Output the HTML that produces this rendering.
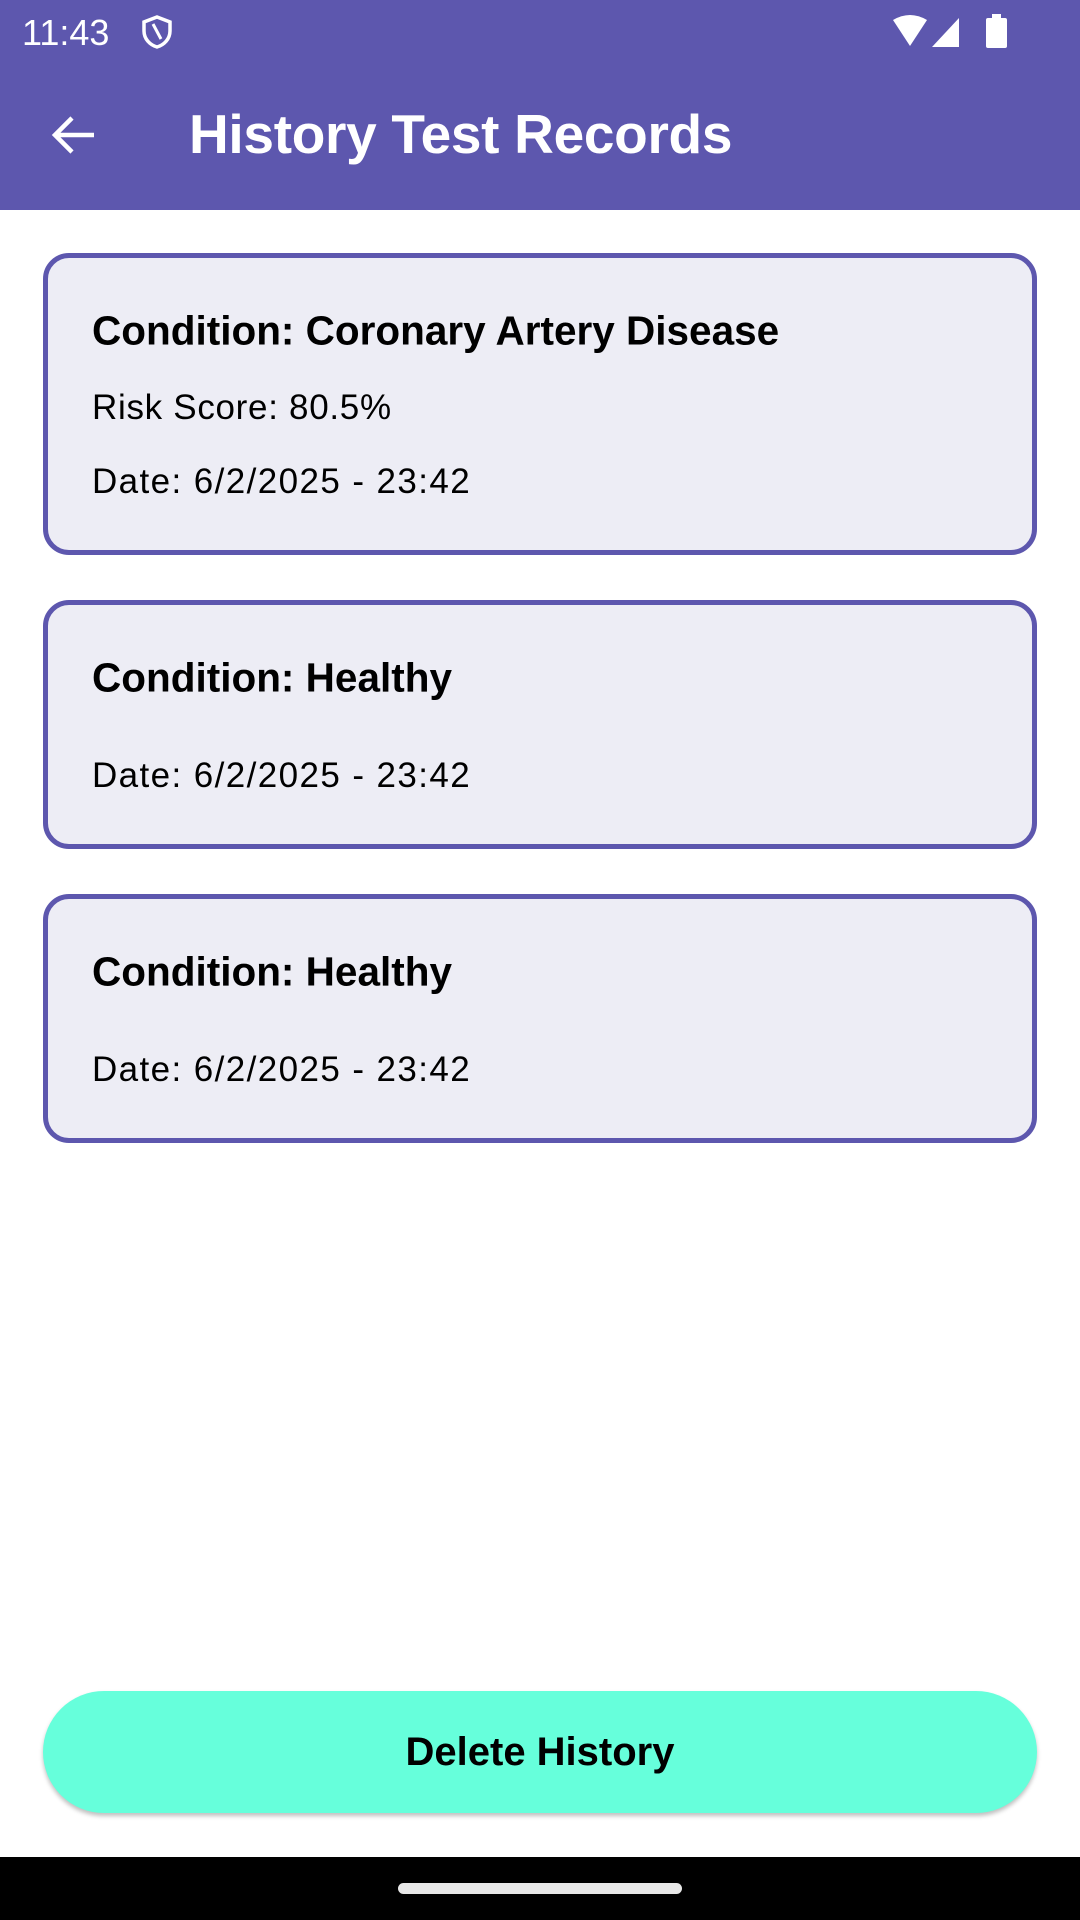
<!DOCTYPE html>
<html><head><meta charset="utf-8"><style>
*{margin:0;padding:0;box-sizing:border-box}
body{width:1080px;height:1920px;background:#fff;font-family:"Liberation Sans",sans-serif;position:relative;overflow:hidden}
.bar{position:absolute;left:0;top:0;width:1080px;height:210px;background:#5d57ae}
.abs{position:absolute;white-space:nowrap}
.card{position:absolute;left:43px;width:994px;background:#ededf5;border:5px solid #5d57ae;border-radius:26px}
.t{position:absolute;left:92px;font-weight:bold;font-size:40.5px;color:#000;transform:translateY(-50%)}
.r{position:absolute;left:92px;font-size:35px;color:#000;transform:translateY(-50%);letter-spacing:0.7px}
.d{letter-spacing:1.4px}
</style></head><body>
<div class="bar"></div>
<div class="abs" style="left:22px;top:12px;font-size:36px;color:#fff">11:43</div>
<svg class="abs" style="left:140px;top:14px" width="34" height="36" viewBox="0 0 34 36"><path d="M17 3 L30 8 V17 C30 25 24 31 17 33 C10 31 4 25 4 17 V8 Z" fill="none" stroke="#fff" stroke-width="3.5"/><path d="M13 10 L21 25" stroke="#fff" stroke-width="3"/></svg>
<svg class="abs" style="left:890px;top:14px" width="120" height="36" viewBox="0 0 120 36"><path d="M3 6 Q20 -4 37 6 L20 32 Z" fill="#fff"/><path d="M42 33 L69 33 L69 4 Z" fill="#fff"/><rect x="96" y="4" width="21" height="30" rx="2" fill="#fff"/><rect x="102" y="0" width="9" height="5" fill="#fff"/></svg>
<svg class="abs" style="left:48px;top:113px" width="50" height="44" viewBox="0 0 50 44"><path d="M46 22 H8 M24 5 L7 22 L24 39" fill="none" stroke="#fff" stroke-width="4.5"/></svg>
<div class="abs" style="left:189px;top:102px;font-size:55px;font-weight:bold;color:#fff;letter-spacing:-0.3px">History Test Records</div>

<div class="card" style="top:253px;height:302px"></div>
<div class="t" style="top:331px">Condition: Coronary Artery Disease</div>
<div class="r" style="top:408px">Risk Score: 80.5%</div>
<div class="r d" style="top:482px">Date: 6/2/2025 - 23:42</div>

<div class="card" style="top:600px;height:249px"></div>
<div class="t" style="top:678px">Condition: Healthy</div>
<div class="r d" style="top:776px">Date: 6/2/2025 - 23:42</div>

<div class="card" style="top:894px;height:249px"></div>
<div class="t" style="top:972px">Condition: Healthy</div>
<div class="r d" style="top:1070px">Date: 6/2/2025 - 23:42</div>

<div class="abs" style="left:43px;top:1691px;width:994px;height:122px;border-radius:61px;background:#66ffdb;box-shadow:0 3px 4px rgba(0,0,0,0.25);display:flex;align-items:center;justify-content:center;font-weight:bold;font-size:40px;color:#000">Delete History</div>

<div class="abs" style="left:0;top:1857px;width:1080px;height:63px;background:#000"></div>
<div class="abs" style="left:398px;top:1883px;width:284px;height:11px;border-radius:6px;background:#e8e8e8"></div>
</body></html>
